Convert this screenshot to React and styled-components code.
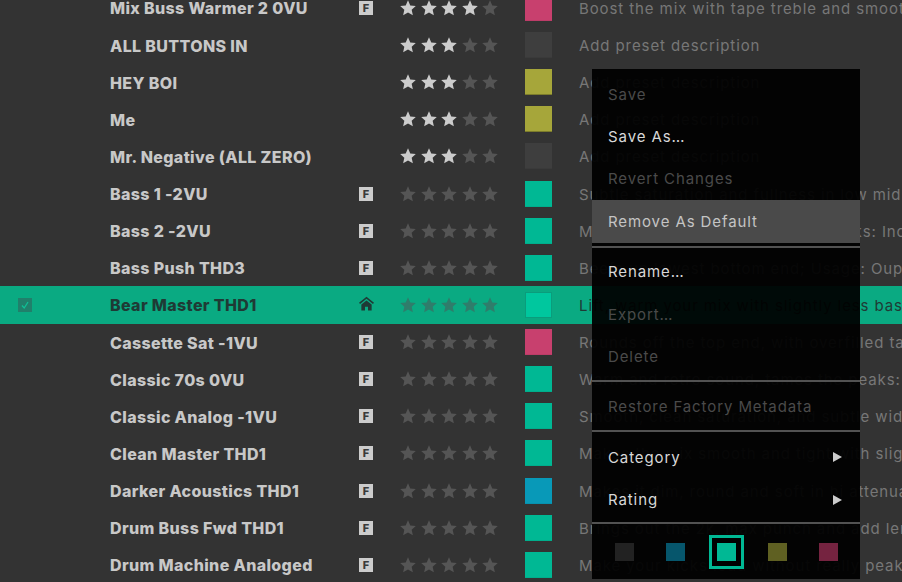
import React from "react";
import styled, { createGlobalStyle } from "styled-components";

const GlobalStyle = createGlobalStyle`
  html, body {
    margin: 0;
    height: 100%;
    background: #333333;
    overflow: hidden;
  }
`;

const colors = {
  pink: "#c8406e",
  gray: "#3e3e3e",
  yellow: "#a6a63a",
  teal: "#00b894",
  blue: "#0899b8",
};

const presets = [
  { name: "Mix Buss Warmer 2 0VU", f: true, stars: 4, color: "pink", desc: "Boost the mix with tape treble and smooth out the low end" },
  { name: "ALL BUTTONS IN", stars: 3, color: "gray", desc: "Add preset description" },
  { name: "HEY BOI", stars: 3, color: "yellow", desc: "Add preset description" },
  { name: "Me", stars: 3, color: "yellow", desc: "Add preset description" },
  { name: "Mr. Negative (ALL ZERO)", stars: 3, color: "gray", desc: "Add preset description" },
  { name: "Bass 1 -2VU", f: true, stars: 0, color: "teal", desc: "Subtle saturation and fullness in low mids and more" },
  { name: "Bass 2 -2VU", f: true, stars: 0, color: "teal", desc: "Makes the bass sit, and tames peaks: Increase" },
  { name: "Bass Push THD3", f: true, stars: 0, color: "teal", desc: "Beefs up lowest bottom end; Usage: Oup" },
  { name: "Bear Master THD1", home: true, selected: true, stars: 0, color: "teal", desc: "Lift, warm your mix with slightly less bass and more" },
  { name: "Cassette Sat -1VU", f: true, stars: 0, color: "pink", desc: "Rounds off the top end, with overfilled tape and more" },
  { name: "Classic 70s 0VU", f: true, stars: 0, color: "teal", desc: "Warm and retro sound, tames the peaks: - more" },
  { name: "Classic Analog -1VU", f: true, stars: 0, color: "teal", desc: "Smooth, clean saturation, and subtle width and" },
  { name: "Clean Master THD1", f: true, stars: 0, color: "teal", desc: "Makes the mix smooth and tight with slight lift" },
  { name: "Darker Acoustics THD1", f: true, stars: 0, color: "blue", desc: "Makes it dim, round and soft in hi attenuation" },
  { name: "Drum Buss Fwd THD1", f: true, stars: 0, color: "teal", desc: "Brings out the 2k, max punch and add length" },
  { name: "Drum Machine Analoged", f: true, stars: 0, color: "teal", desc: "Make your kicks loud without really peaking at all" },
];

const Page = styled.div`
  position: relative;
  width: 902px;
  height: 582px;
  overflow: hidden;
  background: #333333;
  font-family: Inter, "Liberation Sans", sans-serif;
`;

const List = styled.div`
  display: grid;
  grid-auto-rows: 37.13px;
  margin-top: -10.6px;
`;

const Row = styled.div`
  display: grid;
  grid-template-columns: 110px 249px 41px 125px 54px 1fr;
  align-items: center;
  background: ${(p) => (p.$selected ? "#0aaa82" : "transparent")};
`;

const CheckCell = styled.div`
  padding-left: 18px;
  display: flex;
`;

const CheckBox = styled.div`
  width: 14px;
  height: 14px;
  background: #20806b;
  display: flex;
  align-items: center;
  justify-content: center;
`;

const Name = styled.div`
  padding-top: 1px;
  font-size: 16px;
  font-weight: 800;
  letter-spacing: 0.36px;
  white-space: nowrap;
  color: ${(p) => (p.$selected ? "#1f3a35" : "#c8c8c8")};
`;

const Badge = styled.div`
  width: 14px;
  height: 14px;
  background: #cccccc;
  color: #3a3a3a;
  font-size: 11px;
  font-weight: 800;
  line-height: 14px;
  text-align: center;
`;

const Stars = styled.div`
  display: flex;
  gap: 4.5px;
`;

const Swatch = styled.div`
  width: 27px;
  height: 26px;
  box-sizing: border-box;
  background: ${(p) => p.$color};
  border-bottom: 1px solid rgba(0, 0, 0, ${(p) => (p.$color === colors.yellow ? 0.25 : 0.05)});
`;

const SelectedSwatch = styled(Swatch)`
  background: #00c79e;
  border: 1px solid #0a9d7c;
`;

const Desc = styled.div`
  padding-top: 1px;
  font-size: 15px;
  letter-spacing: 0.9px;
  white-space: nowrap;
  overflow: hidden;
  color: ${(p) => (p.$selected ? "#1f3a35" : "#777777")};
`;

const Menu = styled.div`
  position: absolute;
  left: 592px;
  top: 69px;
  width: 268px;
  height: 510px;
  padding-top: 4px;
  box-sizing: border-box;
  background: rgba(0, 0, 0, 0.94);
  display: flex;
  flex-direction: column;
`;

const Item = styled.div`
  flex: none;
  height: 42.4px;
  padding: 0 18px 0 16px;
  display: flex;
  align-items: center;
  justify-content: space-between;
  font-size: 15px;
  letter-spacing: 0.9px;
  color: ${(p) => (p.$disabled ? "#4a4a4a" : "#d8d8d8")};
  background: ${(p) => (p.$hover ? "#4a4a4a" : "transparent")};
  ${(p) => p.$hover && "color: #c4c4c4;"}
`;

const Separator = styled.div`
  flex: none;
  height: 2px;
  background: #525252;
  margin: ${(p) => p.$margin || "2px 0 4px"};
`;

const SwatchRow = styled.div`
  display: flex;
  align-items: center;
  height: 36px;
  margin-top: 10px;
  padding-left: 23px;
  gap: 32px;
`;

const MenuSwatch = styled.div`
  flex: none;
  width: 19px;
  height: 18px;
  background: ${(p) => p.$color};
  ${(p) =>
    p.$active &&
    `box-shadow: 0 0 0 5px #000, 0 0 0 8px #00b894;`}
`;

function Star({ lit, selected }) {
  const fill = selected ? "#2f7d6b" : lit ? "#cccccc" : "#555555";
  return (
    <svg width="16" height="16" viewBox="0 0 24 24">
      <polygon
        fill={fill}
        points="12,0.5 15.4,8.2 23.7,9 17.5,14.6 19.3,22.9 12,18.6 4.7,22.9 6.5,14.6 0.3,9 8.6,8.2"
      />
    </svg>
  );
}

function HomeIcon() {
  return (
    <svg width="15" height="15" viewBox="0 0 14 14">
      <path fill="#1f3a35" d="M7 .6 0 6.2l1 1.2 6-4.8 6 4.8 1-1.2z" />
      <path fill="#1f3a35" d="M7 4.2 2.2 8v5.6h3.4V10h2.8v3.6h3.4V8z" />
    </svg>
  );
}

function Arrow() {
  return (
    <svg width="9" height="10" viewBox="0 0 9 10">
      <polygon fill="#cccccc" points="0,0 9,5 0,10" />
    </svg>
  );
}

function PresetRow({ preset }) {
  const { name, f, home, selected, stars, color, desc } = preset;
  return (
    <Row $selected={selected}>
      <CheckCell>
        {selected && (
          <CheckBox>
            <svg width="10" height="10" viewBox="0 0 10 10">
              <path d="M2 5.5 4.2 8 8 2" fill="none" stroke="#0fc096" strokeWidth="1.3" />
            </svg>
          </CheckBox>
        )}
      </CheckCell>
      <Name $selected={selected}>{name}</Name>
      <div>
        {f && <Badge>F</Badge>}
        {home && <HomeIcon />}
      </div>
      <Stars>
        {[0, 1, 2, 3, 4].map((i) => (
          <Star key={i} lit={i < stars} selected={selected} />
        ))}
      </Stars>
      {selected ? <SelectedSwatch $color={colors[color]} /> : <Swatch $color={colors[color]} />}
      <Desc $selected={selected}>{desc}</Desc>
    </Row>
  );
}

export default function App() {
  return (
    <Page>
      <GlobalStyle />
      <List>
        {presets.map((p) => (
          <PresetRow key={p.name} preset={p} />
        ))}
      </List>
      <Menu>
        <Item $disabled>Save</Item>
        <Item>Save As…</Item>
        <Item $disabled>Revert Changes</Item>
        <Item $hover>Remove As Default</Item>
        <Separator $margin="3px 0 3px" />
        <Item>Rename…</Item>
        <Item $disabled>Export…</Item>
        <Item $disabled>Delete</Item>
        <Separator />
        <Item $disabled>Restore Factory Metadata</Item>
        <Separator />
        <Item>
          Category <Arrow />
        </Item>
        <Item>
          Rating <Arrow />
        </Item>
        <Separator $margin="1px 0 0" />
        <SwatchRow>
          <MenuSwatch $color="#222222" />
          <MenuSwatch $color="#06566c" />
          <MenuSwatch $color="#00b894" $active />
          <MenuSwatch $color="#5f6022" />
          <MenuSwatch $color="#752340" />
        </SwatchRow>
      </Menu>
    </Page>
  );
}
